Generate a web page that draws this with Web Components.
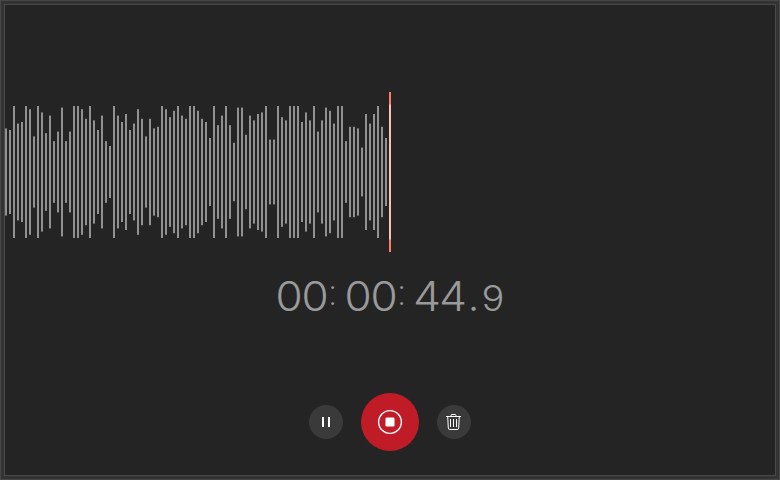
<!DOCTYPE html>
<html lang="en">
<head>
<meta charset="utf-8">
<title>Recorder</title>
<style>
html, body { margin: 0; width: 780px; height: 480px; overflow: hidden; background: #242424; }
</style>
</head>
<body>
<recorder-window>
  <wave-form></wave-form>
  <time-readout hours="00" minutes="00" seconds="44" tenths="9"></time-readout>
  <control-bar>
    <round-button label="Pause">
      <svg width="16" height="16" viewBox="0 0 16 16"><path d="M4 3h2v10H4zM10 3h2v10h-2z" fill="#fff"/></svg>
    </round-button>
    <round-button label="Stop" primary>
      <svg width="26" height="26" viewBox="0 0 26 26"><circle cx="13" cy="13" r="11.4" fill="none" stroke="#fff" stroke-width="1.4"/><rect x="8.5" y="8.5" width="9" height="9" rx="1.3" fill="#fff"/></svg>
    </round-button>
    <round-button label="Delete">
      <svg width="16" height="16" viewBox="0 0 16 16" fill="none" stroke="#fff"><path d="M0 2.5h15M5 2.5v-1q0-1 1-1h3q1 0 1 1v1M1.7 2.5l.6 11.5q.1 1.5 1.5 1.5h7.4q1.4 0 1.5-1.5l.6-11.5M4.5 5v8M7.5 5v8M10.5 5v8"/></svg>
    </round-button>
  </control-bar>
</recorder-window>
<script>
class RecorderWindow extends HTMLElement {
  constructor() {
    super();
    this.attachShadow({ mode: 'open' }).innerHTML = `
      <style>
        :host { display: block; box-sizing: border-box; width: 780px; height: 480px; padding: 3px; border: 1px solid #474747; background: #333; }
        main { box-sizing: border-box; width: 772px; height: 472px; border: 1px solid #4a4a4a; background: #242424; padding-top: 87px; display: flex; flex-direction: column; }
      </style>
      <main><slot></slot></main>`;
  }
}
// Attenuation of each sample in 1.6px steps from the full 66px amplitude.
const LEVELS = [
  14,15,0,11,10,0,2,19,0,4,17,6,22,16,1,22,16,0,0,2,8,0,9,15,
  6,22,25,0,6,10,5,15,11,2,8,19,8,14,13,0,2,7,3,0,6,8,0,0,3,
  8,10,20,0,12,6,0,12,23,1,1,18,6,9,5,4,0,21,21,0,7,9,0,0,0,
  10,4,9,0,16,9,1,3,11,0,0,22,13,13,14,26,5,11,5,0,13,20];
class WaveForm extends HTMLElement {
  constructor() {
    super();
    const bars = LEVELS.map((n, i) => {
      const h = 66 - 1.6 * n;
      return `<rect x="${4 * i}" y="${80 - h}" width="2" height="${2 * h}"/>`;
    }).join('');
    this.attachShadow({ mode: 'open' }).innerHTML = `
      <style>:host { display: block; height: 160px; } svg { display: block; }</style>
      <svg width="770" height="160"><g fill="#919191">${bars}</g>
      <rect x="384" y="0" width="2" height="160" fill="#ff7b63"/><rect x="384" y="12.4" width="2" height="135.2" fill="#ffbfb2"/></svg>`;
  }
}
class TimeReadout extends HTMLElement {
  connectedCallback() {
    const v = n => this.getAttribute(n);
    this.attachShadow({ mode: 'open' }).innerHTML = `
      <style>
        :host { display: flex; height: 50px; margin-top: 19px; padding-left: 271px; font: 300 41px/50px Inter, sans-serif; font-feature-settings: "tnum"; color: #9a9a9a; }
        span { display: flex; justify-content: center; box-sizing: border-box; white-space: nowrap; }
        .n { width: 52px; letter-spacing: -2.4px; padding-right: 2.4px; transform: scaleX(1.08); }
        .c { width: 17px; font-size: 36px; font-weight: 200; line-height: 43px; margin: 0 4px 0 -4px; }
        .d { width: 14px; transform: translateX(.6px); }
        .t { width: 26px; font-size: 35px; line-height: 54px; transform: scaleX(1.08); }
      </style>
      <span class="n">${v('hours')}</span><span class="c">:</span><span class="n">${v('minutes')}</span><span class="c">:</span><span class="n">${v('seconds')}</span><span class="d">.</span><span class="t">${v('tenths')}</span>`;
  }
}
class ControlBar extends HTMLElement {
  constructor() {
    super();
    this.attachShadow({ mode: 'open' }).innerHTML = `
      <style>:host { display: flex; justify-content: center; align-items: center; gap: 18px; height: 58px; margin-top: 72px; }</style><slot></slot>`;
  }
}
class RoundButton extends HTMLElement {
  connectedCallback() {
    this.attachShadow({ mode: 'open' }).innerHTML = `
      <style>
        :host { display: block; width: 34px; height: 34px; }
        :host([primary]) { width: 58px; height: 58px; }
        button { display: flex; align-items: center; justify-content: center; width: 100%; height: 100%; margin: 0; padding: 0; border: 0; border-radius: 50%; background: #3a3a3a; }
        :host([primary]) button { background: #c01c28; }
        ::slotted(svg) { display: block; }
      </style>
      <button aria-label="${this.getAttribute('label')}"><slot></slot></button>`;
  }
}
customElements.define('recorder-window', RecorderWindow);
customElements.define('wave-form', WaveForm);
customElements.define('time-readout', TimeReadout);
customElements.define('control-bar', ControlBar);
customElements.define('round-button', RoundButton);
</script>
</body>
</html>
